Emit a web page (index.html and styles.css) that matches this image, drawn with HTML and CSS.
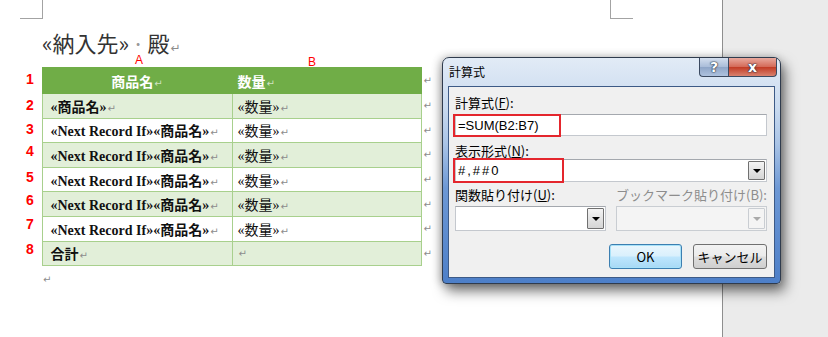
FILE: index.html
```html
<!DOCTYPE html>
<html lang="ja">
<head>
    <meta charset="UTF-8">
    <title>差し込み印刷 - 計算式</title>
    <link rel="stylesheet" href="styles.css">
</head>
<body>
    <div class="screen">
        <div class="doc">
            <span class="crop crop-left"></span>
            <span class="crop crop-right"></span>

            <p class="heading">«納入先»<span class="sp">·</span>殿<span class="ret">↵</span></p>
            <div class="col-letters"><span class="letter-a">A</span><span class="letter-b">B</span></div>

            <table class="merge">
                <colgroup>
                    <col class="w-num"><col class="w-a"><col class="w-b"><col class="w-end">
                </colgroup>
                <tr class="head">
                    <td class="num">1</td>
                    <th class="ca">商品名<span class="ret">↵</span></th>
                    <th class="cb">数量<span class="ret">↵</span></th>
                    <td class="end">↵</td>
                </tr>
                <tr class="band">
                    <td class="num">2</td>
                    <td class="ca">«商品名»<span class="ret">↵</span></td>
                    <td class="cb">«数量»<span class="ret">↵</span></td>
                    <td class="end">↵</td>
                </tr>
                <tr>
                    <td class="num">3</td>
                    <td class="ca">«Next Record If»«商品名»<span class="ret">↵</span></td>
                    <td class="cb">«数量»<span class="ret">↵</span></td>
                    <td class="end">↵</td>
                </tr>
                <tr class="band">
                    <td class="num up">4</td>
                    <td class="ca">«Next Record If»«商品名»<span class="ret">↵</span></td>
                    <td class="cb">«数量»<span class="ret">↵</span></td>
                    <td class="end">↵</td>
                </tr>
                <tr>
                    <td class="num up-s">5</td>
                    <td class="ca">«Next Record If»«商品名»<span class="ret">↵</span></td>
                    <td class="cb">«数量»<span class="ret">↵</span></td>
                    <td class="end">↵</td>
                </tr>
                <tr class="band">
                    <td class="num up">6</td>
                    <td class="ca">«Next Record If»«商品名»<span class="ret">↵</span></td>
                    <td class="cb">«数量»<span class="ret">↵</span></td>
                    <td class="end">↵</td>
                </tr>
                <tr>
                    <td class="num up">7</td>
                    <td class="ca">«Next Record If»«商品名»<span class="ret">↵</span></td>
                    <td class="cb">«数量»<span class="ret">↵</span></td>
                    <td class="end">↵</td>
                </tr>
                <tr class="band">
                    <td class="num up">8</td>
                    <td class="ca">合計<span class="ret">↵</span></td>
                    <td class="cb"><span class="ret">↵</span></td>
                    <td class="end">↵</td>
                </tr>
            </table>
            <p class="after">↵</p>
        </div>
        <div class="margin-area"></div>

        <!-- 計算式 dialog -->
        <div class="dialog">
            <div class="titlebar">
                <span class="title">計算式</span>
                <span class="tb-btn tb-help">?</span>
                <span class="tb-btn tb-close">x</span>
            </div>
            <div class="client">
                <label class="lbl">計算式(<u>F</u>):</label>
                <div class="field">
                    <span class="value">=SUM(B2:B7)</span>
                    <span class="mark mark-1"></span>
                </div>

                <label class="lbl lbl-2">表示形式(<u>N</u>):</label>
                <div class="field combo">
                    <span class="value mono">#,##0</span>
                    <span class="drop"><i class="tri"></i></span>
                    <span class="mark mark-2"></span>
                </div>

                <div class="pair">
                    <div>
                        <label class="lbl">関数貼り付け(<u>U</u>):</label>
                        <div class="field combo tall">
                            <span class="value"></span>
                            <span class="drop"><i class="tri"></i></span>
                        </div>
                    </div>
                    <div>
                        <label class="lbl off">ブックマーク貼り付け(B):</label>
                        <div class="field combo tall disabled">
                            <span class="value"></span>
                            <span class="drop"><i class="tri"></i></span>
                        </div>
                    </div>
                </div>

                <div class="buttons">
                    <button class="btn btn-ok">OK</button>
                    <button class="btn">キャンセル</button>
                </div>
            </div>
        </div>
    </div>
</body>
</html>
```

FILE: styles.css
```css
body {
    margin: 0;
    background: #ebebeb;
}
.screen {
    width: 828px; height: 337px;
    display: flex; position: relative; overflow: hidden;
}
.doc {
    width: 722px; background: #fff;
    border-right: 1px solid #8e8e8e;
    position: relative;
}
.margin-area { flex: 1; background: #ebebeb; }

.crop {
    position: absolute; top: 0;
    width: 22px; height: 18px;
    border: 0 solid #a3a3a3;
}
.crop-left { left: 20px; border-width: 0 1px 1px 0; }
.crop-right { left: 610px; border-width: 0 0 1px 1px; }

.heading {
    margin: 0; padding: 31px 0 0 42px; height: 22px;
    font: 22px/22px "Noto Sans CJK JP", sans-serif;
    color: #333;
    white-space: nowrap;
}
.heading .sp { color: #999; margin: 0 3px; }
.heading .ret { font-size: 12px; }

.ret {
    font: 10px "DejaVu Sans", sans-serif;
    color: #8c8c8c; margin-left: 1px;
}

.col-letters {
    height: 14px; display: flex; padding-left: 135px;
    font: 12px/12px "Liberation Sans", Arial, sans-serif;
    color: #f00;
}
.letter-a { padding-top: 1px; }
.letter-b { margin-left: 165px; padding-top: 3px; }

/* merge table */
.merge {
    border-collapse: collapse; table-layout: fixed;
    width: 451px;
    font: bold 14px "Liberation Serif", "Noto Sans CJK JP", serif;
    color: #111;
}
.w-num { width: 42px; }
.w-a { width: 190px; }
.w-b { width: 189px; }
.w-end { width: 30px; }
.merge td, .merge th {
    height: 23.6px; padding: 0; white-space: nowrap;
    text-align: left;
}
.merge .ca, .merge .cb { border: 1px solid #a8d08d; }
.merge .ca { padding-left: 8px; }
.merge .cb { padding-left: 5px; font-weight: normal; }
.merge .band .ca, .merge .band .cb { background: #e2efd9; }

.merge .head th {
    height: 25px;
    background: #70ad47; color: #fff; font-weight: bold;
    border-color: #70ad47;
}
.merge .head .ca { text-align: center; padding-left: 0; }
.merge .head .cb { border-left: 1px dotted #fff; }
.merge .head .ret { color: #cfe2c1; }

/* red row numbers, hand-placed in the original: top-aligned, line box sets the shift */
.merge .num {
    vertical-align: top;
    padding-left: 26px;
    font: bold 14px/23px "Liberation Sans", Arial, sans-serif;
    color: #f00;
}
.merge .num.up { line-height: 17px; }
.merge .num.up-s { line-height: 20px; }
.merge .end {
    padding-left: 2px;
    font: 10px "DejaVu Sans", sans-serif; color: #8c8c8c;
}

.after {
    margin: 8px 0 0 43px;
    font: 10px "DejaVu Sans", sans-serif; color: #8c8c8c;
}

/* dialog */
.dialog {
    position: absolute; left: 442px; top: 57px;
    width: 339px; height: 227px; box-sizing: border-box;
    border: 1px solid #2f3b4d; border-radius: 7px 7px 4px 4px;
    padding: 0 5px 5px;
    display: flex; flex-direction: column;
    background: linear-gradient(#e2ebf6 0, #c9daef 22%, #aac4e6 38%, #6d98d5 58%, #4d7fc8 100%);
    box-shadow: 4px 7px 13px rgba(0,0,0,0.55), -2px 0 8px rgba(0,0,0,0.25);
    font-family: "Noto Sans CJK JP", sans-serif;
}
.titlebar {
    height: 28px; display: flex; align-items: flex-start;
}
.title {
    font-size: 12px; line-height: 16px; color: #000;
    padding: 6px 0 0 1px;
}
.tb-btn {
    height: 18px; margin-top: 0;
    border: 1px solid #3b4a61; border-top: 0;
    display: flex; align-items: center; justify-content: center;
    font: bold 14px/1 "DejaVu Sans", sans-serif; color: #fff;
    text-shadow: 0 0 1px #2a3547, 0 0 1px #2a3547, 0 0 2px #2a3547;
}
.tb-help {
    margin-left: auto; width: 28px;
    border-radius: 0 0 0 4px; border-right: 0;
    background: linear-gradient(#d3deee, #a9bcd8 50%, #8fa6c8 52%, #aec2de);
}
.tb-close {
    width: 47px; margin-right: -2px;
    border-radius: 0 0 4px 0;
    background: linear-gradient(#e9a99e, #d46b59 48%, #c23c26 52%, #d9826f);
}

.client {
    flex: 1;
    border: 1px solid #3d5a86;
    background: #f0f0f0;
    padding: 7px 7px 0 6px;
    font-size: 13px; color: #000;
}
.lbl {
    display: block; height: 17px; line-height: 17px;
    font-size: 13px; white-space: nowrap;
}
.lbl.off { color: #8d8d8d; }
.lbl-2 { margin-top: 6px; }

.field {
    position: relative; height: 22px; margin-top: 3px;
    box-sizing: border-box;
    background: #fff;
    border: 1px solid #c4c8ce; border-top-color: #a4a8ae;
    display: flex; align-items: center;
}
.value {
    flex: 1; padding-left: 2px;
    font: 13px "Liberation Sans", Arial, sans-serif;
}
.value.mono { letter-spacing: 2px; }
.combo { height: 23px; margin-top: 0; }
.combo.tall { height: 25px; margin-top: 3px; }

.drop {
    width: 15px; align-self: stretch; margin: 1px;
    border: 1px solid #707070; border-radius: 1px;
    background: linear-gradient(#f4f4f4, #e4e4e4 50%, #d5d5d5);
    display: flex; align-items: center; justify-content: center;
}
.tri {
    width: 0; height: 0;
    border-left: 4px solid transparent; border-right: 4px solid transparent;
    border-top: 4px solid #000;
}
.disabled { background: #f4f4f4; border-color: #c9cdd2; }
.disabled .drop { border-color: #c9cdd2; background: #f4f4f4; }
.disabled .tri { border-top-color: #a9a9a9; }

.mark {
    position: absolute; left: -3px; top: -1px;
    border: 2px solid #e4262d; box-sizing: border-box;
}
.mark-1 { width: 108px; height: 23px; }
.mark-2 { width: 111px; height: 25px; top: -2px; }

.pair {
    display: grid; grid-template-columns: 1fr 1fr; gap: 10px;
    margin-top: 4px;
}
.buttons {
    display: flex; justify-content: flex-end; gap: 11px;
    margin-top: 13px;
}
.btn {
    width: 74px; height: 25px; padding: 0;
    border: 1px solid #707070; border-radius: 3px;
    background: linear-gradient(#f2f2f2, #ebebeb 48%, #dddddd 52%, #cfcfcf);
    font: 13px "Noto Sans CJK JP", sans-serif; color: #000;
}
.btn-ok {
    width: 73px;
    border-color: #3c7fb1;
    box-shadow: inset 0 0 0 1px #a7e1f8;
    background: linear-gradient(#eaf6fd, #d9f0fc 48%, #bee6fd 52%, #a7d9f5);
}
```
